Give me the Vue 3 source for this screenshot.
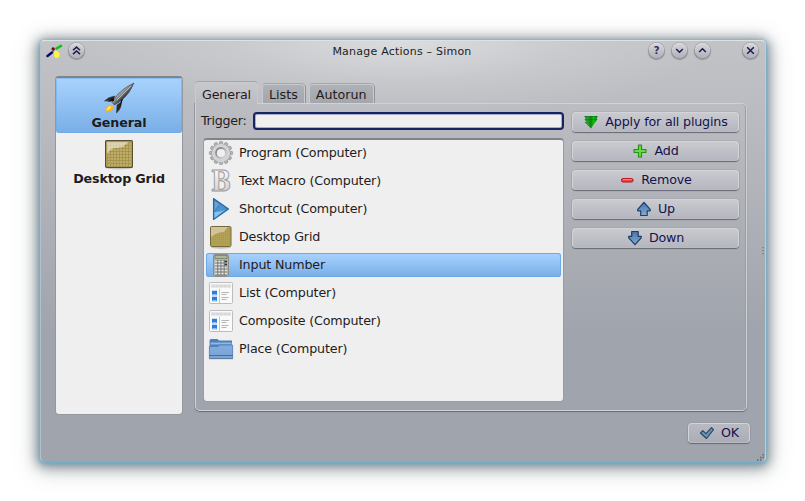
<script setup>
const pages = [
  { label: 'General', icon: 'rocket' },
  { label: 'Desktop Grid', icon: 'grid' },
]
const tabs = ['General', 'Lists', 'Autorun']
const items = [
  { label: 'Program (Computer)', icon: 'gear' },
  { label: 'Text Macro (Computer)', icon: 'bold' },
  { label: 'Shortcut (Computer)', icon: 'play' },
  { label: 'Desktop Grid', icon: 'grid' },
  { label: 'Input Number', icon: 'calc' },
  { label: 'List (Computer)', icon: 'list' },
  { label: 'Composite (Computer)', icon: 'list' },
  { label: 'Place (Computer)', icon: 'folder' },
]
const actions = [
  { label: 'Apply for all plugins', icon: 'apply' },
  { label: 'Add', icon: 'add' },
  { label: 'Remove', icon: 'remove' },
  { label: 'Up', icon: 'up' },
  { label: 'Down', icon: 'down' },
]
const teeth = Array.from({ length: 12 }, (_, i) => i * 30)
</script>

<template>
  <svg class="defs" width="0" height="0">
    <defs>
      <linearGradient id="silver" x1="0" y1="0" x2="1" y2="1">
        <stop offset="0" stop-color="#77777c" /><stop offset=".5" stop-color="#aaa" /><stop offset="1" stop-color="#ddd" />
      </linearGradient>
      <linearGradient id="letter" x1="0" y1="0" x2="0" y2="1">
        <stop offset="0" stop-color="#fff" /><stop offset="1" stop-color="#c9c9c9" />
      </linearGradient>
      <linearGradient id="blue" x1="0" y1="0" x2="1" y2="1">
        <stop offset="0" stop-color="#2c6fae" /><stop offset=".5" stop-color="#4f98d2" /><stop offset="1" stop-color="#2a69a8" />
      </linearGradient>
      <linearGradient id="arrow" x1="0" y1="0" x2="0" y2="1">
        <stop offset="0" stop-color="#4776ab" /><stop offset="1" stop-color="#86aad2" />
      </linearGradient>
      <linearGradient id="fold" x1="0" y1="0" x2="0" y2="1">
        <stop offset="0" stop-color="#83addd" /><stop offset="1" stop-color="#78a2d5" />
      </linearGradient>
      <linearGradient id="green" x1="0" y1="0" x2="1" y2="0">
        <stop offset="0" stop-color="#1b7a2a" /><stop offset=".25" stop-color="#2b9a2f" /><stop offset=".5" stop-color="#0a860a" /><stop offset=".7" stop-color="#08c708" /><stop offset="1" stop-color="#086b08" />
      </linearGradient>
      <linearGradient id="hull" x1="0" y1="0" x2="1" y2="1">
        <stop offset=".3" stop-color="#e0e4e8" /><stop offset=".48" stop-color="#81868b" /><stop offset=".62" stop-color="#25282c" />
      </linearGradient>
      <pattern id="mesh" width="2" height="2" patternUnits="userSpaceOnUse">
        <path d="M0 .5h2M.5 0v2" stroke="#8f7e40" stroke-width=".6" opacity=".55" />
      </pattern>
      <pattern id="mesh-wide" x="1" y="1" width="3" height="3" patternUnits="userSpaceOnUse">
        <path d="M0 .5h3M.5 0v3" stroke="#94823f" stroke-width=".8" />
      </pattern>
    </defs>
  </svg>

  <div class="backdrop">
  <div class="window">
    <header class="titlebar">
      <svg class="logo" width="17" height="14" viewBox="0 0 17 14">
        <path d="M1.500 12 6 8.500" stroke="#08086b" stroke-width="2.400" stroke-linecap="round" />
        <path d="M10.500 4.500 15 1.800" stroke="#05c80f" stroke-width="2.600" stroke-linecap="round" />
        <path d="M9 7q-1.500 4.500 0 6.300l3.500 0q2-3-.5-5.500z" fill="#fcf540" stroke="#fcf540" stroke-width=".8" />
        <circle cx="7.200" cy="5" r="1.700" fill="#680d18" />
        <path d="M7.500 6.500 6 9" stroke="#222" stroke-width=".8" />
      </svg>
      <span class="round shade"><svg width="15" height="15" viewBox="0 0 15 15"><path d="m4 7.300 3.500-3.200L11 7.300M4 11.100l3.500-3.200 3.500 3.200" /></svg></span>
      <h1>Manage Actions – Simon</h1>
      <div class="controls">
        <span class="round"><b>?</b></span>
        <span class="round"><svg width="15" height="15" viewBox="0 0 15 15"><path d="m4.200 6 3.300 3.200L10.800 6" /></svg></span>
        <span class="round"><svg width="15" height="15" viewBox="0 0 15 15"><path d="m4.200 9 3.300-3.200L10.800 9" /></svg></span>
        <span class="round close"><svg width="15" height="15" viewBox="0 0 15 15"><path d="m4.200 4.200 6.600 6.600m0-6.600-6.600 6.600" /></svg></span>
      </div>
    </header>

    <div class="body">
      <nav class="pages">
        <div v-for="(p, i) in pages" :key="p.label" class="page" :class="{ active: i === 0 }">
          <svg v-if="p.icon === 'rocket'" width="32" height="32" viewBox="0 0 32 32">
            <path d="M12 14Q5 15 1.500 19L10 18.500zM18 20Q19 26 13.500 31L14 23z" fill="#25282c" stroke="#3a3d41" stroke-width=".6" />
            <path d="M31 1Q22 5 15 12L9 20.500l2.500 2.500L19 18Q27 11 31 1z" fill="url(#hull)" stroke="#484c52" stroke-width=".7" />
            <path d="M28 4 14 18" stroke="#d6dbe0" stroke-width="1" opacity=".65" />
            <path d="m11 16-7 4 7-1zM18 18l-1 8 3-9z" fill="#0f1114" />
            <path d="M6 22.500q-4 3-3.500 8 6-.5 8-4.500 0-3-4.500-3.500z" fill="#f4b323" />
            <path d="M7 24q-3 1-3.500 4.500 3-.5 5-3z" fill="#ffe66a" />
          </svg>
          <svg v-else width="32" height="32" viewBox="0 0 32 32">
            <ellipse cx="16" cy="30" rx="13" ry="1.500" fill="#000" opacity=".17" />
            <rect x="2.600" y="2.600" width="26.800" height="26.800" rx="1" fill="#c0ad68" stroke="#57502f" stroke-width="1.200" />
            <rect x="4" y="4" width="24" height="24" fill="url(#mesh-wide)" opacity=".7" />
            <path d="M4 4h22q-4 2-6 5-4 1-9 1-5 2-7 6z" fill="#fff" opacity=".5" />
          </svg>
          <span>{{ p.label }}</span>
        </div>
      </nav>

      <section class="main">
        <div class="tabs">
          <div v-for="(t, i) in tabs" :key="t" class="tab" :class="{ current: i === 0 }">{{ t }}</div>
        </div>
        <div class="panel">
          <div class="left">
            <label class="trigger"><span>Trigger:</span><input type="text" /></label>
            <ul class="list">
              <li v-for="it in items" :key="it.label" :class="{ selected: it.icon === 'calc' }">
                <svg width="24" height="24" viewBox="0 0 24 24">
                  <g v-if="it.icon === 'gear'">
                    <g fill="#b4b4b8" stroke="#8a8a8e" stroke-width=".6">
                      <rect v-for="a in teeth" :key="a" x="10.300" y=".4" width="3.400" height="5" rx="1" :transform="`rotate(${a} 12 12)`" />
                    </g>
                    <circle cx="12" cy="12" r="7" fill="none" stroke="#98989c" stroke-width="5.200" />
                    <circle cx="12" cy="12" r="7" fill="none" stroke="#d3d3d6" stroke-width="4.300" />
                    <circle cx="12" cy="12" r="5" fill="#efefef" stroke="url(#silver)" stroke-width="1.800" />
                  </g>
                  <text v-else-if="it.icon === 'bold'" class="letter" x="12" y="21.500" text-anchor="middle" textLength="20" lengthAdjust="spacingAndGlyphs">B</text>
                  <g v-else-if="it.icon === 'play'">
                    <path d="M4.500 1.500v21L19.500 12z" fill="url(#blue)" stroke="#2865a1" stroke-width="1.100" stroke-linejoin="round" />
                    <path d="M5.500 15q7 0 12-3L5.500 21z" fill="#a7dcff" opacity=".65" />
                    <path d="M5.500 3.500 10 7l-4.500 6z" fill="#8fc4ee" opacity=".5" />
                  </g>
                  <g v-else-if="it.icon === 'grid'">
                    <ellipse cx="12" cy="22.500" rx="10" ry="1.200" opacity=".2" />
                    <rect x="1.500" y="1.500" width="20.500" height="20" rx="1.300" fill="#b7a45b" stroke="#746838" />
                    <rect x="2.500" y="2.500" width="18.500" height="18" fill="url(#mesh)" opacity=".6" />
                    <path d="M2 2h17q-3 3-4 5-7 0-13 5z" fill="#fff" opacity=".4" />
                  </g>
                  <g v-else-if="it.icon === 'calc'">
                    <rect x="4.500" y="1.500" width="15" height="22" rx="1" fill="#b0b2ae" stroke="#8b8d8a" />
                    <rect x="6" y="2.500" width="12" height="3" fill="#a9b896" stroke="#6f7d62" stroke-width=".7" />
                    <rect x="6" y="7" width="12" height="15.500" fill="#6f716e" />
                    <path d="M6 8.500h12M6 11.500h12M6 14.500h12M6 17.500h12M6 20.500h12" stroke="#e6e6e4" stroke-width="1.900" stroke-dasharray="2.300 .9" />
                    <path d="M15.500 8.500h2.500M15.500 11.500h2.500" stroke="#333" stroke-width="1.600" />
                  </g>
                  <g v-else-if="it.icon === 'list'">
                    <rect x=".5" y="1.500" width="23" height="21" rx="1" fill="#fafafa" stroke="#bcbcbe" />
                    <path d="M2 5h20" stroke="#e2e2e4" stroke-width="3.500" />
                    <path d="M3 5h18" stroke="#cdcdce" stroke-width=".9" stroke-dasharray="3 1" />
                    <path d="M10.500 7.500V22" stroke="#c8c8c8" />
                    <path d="M3 9.700h5v4.500H3zM3 15.700h5v4.500H3z" fill="#2d7cdc" />
                    <path d="M3.500 13.500h4M3.500 19.500h4" stroke="#8cc4f8" fill="none" stroke-width="1.200" />
                    <path d="M12.500 11.500h7.500M12.500 13.500h5M12.500 16.500h7M12.500 18.500h5" stroke="#b6b6b6" />
                  </g>
                  <g v-else>
                    <path d="M.5 12V3.500l1-1.500h7L10 3.500h13V12z" fill="#4e80ba" />
                    <path d="M1.500 6.500h21" stroke="#8fb7e2" stroke-width="2" />
                    <path d="M.4 21.500V9.500H9L10.500 8h13.100v13.500z" fill="url(#fold)" stroke="#4a7bb5" stroke-width=".8" />
                    <path d="M0 18.500h24" stroke="#3d72b0" />
                    <path d="M0 21.700h24" stroke="#5e7894" stroke-width=".8" />
                  </g>
                </svg>
                <span>{{ it.label }}</span>
              </li>
            </ul>
          </div>
          <div class="actions">
            <button v-for="a in actions" :key="a.label" class="btn">
              <svg width="16" height="16" viewBox="0 0 16 16">
                <g v-if="a.icon === 'apply'">
                  <path d="M1.200 2h13.600L13.500 5h1L8 14.500 1.500 8h2L1.300 5h1.500z" fill="url(#green)" />
                  <path d="M2 2.500h12M3 5.500h10.500" stroke="#05500a" stroke-width=".6" opacity=".45" />
                </g>
                <path v-else-if="a.icon === 'add'" d="M6.500 2h3v4.500H14v3H9.500V14h-3V9.500H2v-3h4.500z" fill="#6cdb43" stroke="#249018" stroke-width="1.100" stroke-linejoin="round" />
                <g v-else-if="a.icon === 'remove'">
                  <rect x="2.500" y="6.600" width="11.500" height="3.400" rx="1.400" fill="#ec4646" stroke="#bb0c14" />
                  <path d="M4 7.500h8.500" stroke="#ff9995" stroke-width=".8" />
                </g>
                <path v-else-if="a.icon === 'up'" d="M8 1.300 1.700 8.500v1.300h3v4.700h6.500V9.800h3V8.500z" fill="url(#arrow)" stroke="#20406f" stroke-width="1.200" stroke-linejoin="round" />
                <path v-else d="M8 14.700 1.700 7.800V6.300h3V1.500h6.500v4.800h3v1.500z" fill="url(#arrow)" stroke="#203b5c" stroke-width="1.200" stroke-linejoin="round" />
              </svg>
              <span>{{ a.label }}</span>
            </button>
          </div>
        </div>
      </section>
    </div>

    <footer class="footer">
      <button class="btn ok">
        <svg width="16" height="16" viewBox="0 0 16 16">
          <path d="m1.500 8 2.300-2.300L7 8.600l5.500-6 2 2L7.500 13.500z" fill="#6a93b9" stroke="#29445f" stroke-width="1.100" stroke-linejoin="round" />
        </svg>
        <span>OK</span>
      </button>
    </footer>
    <svg class="side-grip" width="3" height="9" viewBox="0 0 3 9"><path d="M1 0v1.200M1 3v1.200M1 6v1.200" stroke="#777b82" stroke-width="1.500" /></svg>
    <svg class="corner-grip" width="7" height="7" viewBox="0 0 7 7"><path d="M0 6h1.400M3 6h1.400M3 3.500h1.400M5.400 3.500h1.400M5.400.8h1.400" stroke="#60636a" stroke-width="1.400" /></svg>
  </div>
  </div>
</template>

<style>
body {
  margin: 0;
  background: #fff;
}
</style>

<style scoped>
* {
  box-sizing: border-box;
}
.defs {
  position: absolute;
}
.backdrop {
  width: 805px;
  height: 501px;
  padding: 40px 0 0 40px;
  overflow: hidden;
}
.window {
  position: relative;
  width: 726px;
  height: 422px;
  border: 1px solid;
  border-color: #dfe1e3 #c5ccd1 #9ea4ac #b5c0c8;
  border-radius: 5px;
  background:
    radial-gradient(ellipse 310px 75px at 50% 0, rgba(228, 229, 231, .75), rgba(215, 216, 219, .35) 55%, transparent),
    linear-gradient(#c2c3c7 0, #bbbcc1 70px, #a0a4ac 290px, #a0a4ac 100%);
  box-shadow: 0 1px 3px 1px rgba(108, 176, 208, .9), 0 2px 12px 3px rgba(65, 85, 98, .6), 0 4px 22px 4px rgba(100, 105, 105, .35);
  font: 12.700px/16px "DejaVu Sans", sans-serif;
  letter-spacing: -.15px;
  color: #1f1c1b;
  display: flex;
  flex-direction: column;
}
.titlebar {
  display: grid;
  grid-template-columns: 22px 60px 1fr 110px;
  height: 35px;
  padding: 2px 6px 0 4px;
  align-items: start;
}
.logo {
  margin: 1px 0 0 1px;
}
.titlebar h1 {
  margin: 2px 0 0;
  padding-left: 28px;
  font: 11px/14px "DejaVu Sans", sans-serif;
  letter-spacing: .22px;
  text-align: center;
  white-space: nowrap;
}
.controls {
  display: flex;
  gap: 8px;
}
.round {
  width: 15px;
  height: 15px;
  border-radius: 50%;
  background: linear-gradient(#d5d6da, #b0b1b9);
  box-shadow: 0 0 0 1px rgba(150, 152, 160, .45), 0 1px 1px 1px rgba(105, 107, 115, .55), inset 0 1px 0 #dedfe3;
  display: flex;
  align-items: center;
  justify-content: center;
}
.round.shade {
  margin-left: 2px;
}
.round.close {
  margin-left: auto;
  margin-right: 1px;
}
.round b {
  font: bold 10px/15px "DejaVu Sans", sans-serif;
  color: #303058;
}
.round path {
  fill: none;
  stroke: #191c4c;
  stroke-width: 1.500;
}
.body {
  display: flex;
  gap: 11px;
  height: 339px;
  padding: 0 18px 0 14px;
}
.pages {
  width: 128px;
  height: 339px;
  border: 1px solid #93979e;
  border-top: 2px solid #808489;
  border-radius: 4px;
  background: #efefef;
  overflow: hidden;
}
.page {
  height: 55px;
  padding-top: 4px;
  display: flex;
  flex-direction: column;
  align-items: center;
  font: bold 12.700px/18px "DejaVu Sans", sans-serif;
}
.page + .page {
  padding-top: 5px;
}
.page.active {
  background: linear-gradient(#a9d3ff, #78aee6);
  box-shadow: inset 0 0 0 1px rgba(106, 169, 231, .5);
  border-radius: 3px;
}
.page svg {
  flex: none;
}
.main {
  flex: 1;
  padding-top: 5px;
}
.tabs {
  display: flex;
  align-items: flex-end;
  gap: 4px;
  height: 22px;
  padding-left: 1px;
}
.tab {
  height: 19px;
  padding: 2px 6px 0;
  border: 1px solid #c9cacd;
  border-bottom: 0;
  border-radius: 4px 4px 0 0;
  background: linear-gradient(#afb1b7, #a3a6ad);
  box-shadow: 0 -1px 0 rgba(150, 153, 160, .7), 1px 0 0 #8f9299;
  letter-spacing: 0;
}
.tab.current {
  position: relative;
  z-index: 1;
  height: 22px;
  padding: 4px 6px 0;
  background: linear-gradient(#c7c8cc, #bbbcc1);
  box-shadow: 0 -1px 0 #a3a5aa;
  margin-bottom: -1px;
  letter-spacing: -.15px;
}
.panel {
  display: flex;
  gap: 8px;
  height: 308px;
  width: 552px;
  margin-left: 1px;
  padding: 8px 7px 8px 5px;
  border: 1px solid #d0d2d5;
  border-radius: 0 5px 5px 5px;
  box-shadow: 0 1px 1px #686c72, -1px 0 0 #999da3, inset -1px 0 0 #999ca2;
}
.left {
  width: 363px;
}
.trigger {
  display: flex;
  height: 19px;
}
.trigger span {
  width: 52px;
  line-height: 18px;
  letter-spacing: -.3px;
}
.trigger input {
  width: 311px;
  height: 18px;
  padding: 0;
  border: 2px solid #17245f;
  border-radius: 4px;
  background: #efefef;
  box-shadow: inset 0 0 0 1px #a7adc8;
}
.list {
  list-style: none;
  width: 361px;
  height: 264px;
  margin: 7px 0 0 2px;
  padding: 0 2px;
  border: 1px solid #989ca3;
  border-top: 2px solid #808489;
  border-radius: 4px;
  background: #efefef;
}
.list li {
  display: flex;
  align-items: center;
  gap: 6px;
  height: 24px;
  margin: 1px 0 4px;
  padding-left: 3px;
  border-radius: 3px;
}
.list li svg {
  flex: none;
  overflow: visible;
}
.list li.selected {
  background: linear-gradient(#a9d3ff, #78aee6);
  box-shadow: inset 0 0 0 1px #6da9e6;
}
.letter {
  font: bold 27px "DejaVu Serif", serif;
  fill: url(#letter);
  stroke: #979797;
  stroke-width: 1;
}
.actions {
  display: flex;
  flex-direction: column;
  gap: 9px;
}
.btn {
  width: 167px;
  height: 20px;
  padding: 0;
  border: 1px solid #d3d4d8;
  border-bottom-color: #b9bbc1;
  border-radius: 4px;
  background: linear-gradient(#cacbd0, #b5b6bf);
  box-shadow: 0 1px 1px #666a71, 0 0 0 1px rgba(115, 119, 126, .15);
  font: 12.700px/16px "DejaVu Sans", sans-serif;
  letter-spacing: -.18px;
  color: #14124b;
  display: flex;
  align-items: center;
  justify-content: center;
  gap: 6px;
}
.footer {
  display: flex;
  justify-content: flex-end;
  padding: 8px 15px 0 0;
}
.btn.ok {
  width: 62px;
  background: linear-gradient(#b9bac1, #abadb7);
}
.side-grip {
  position: absolute;
  right: 0;
  top: 206px;
}
.corner-grip {
  position: absolute;
  right: 1px;
  bottom: 0;
}
</style>
